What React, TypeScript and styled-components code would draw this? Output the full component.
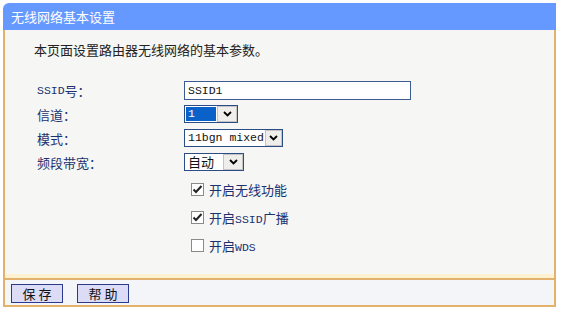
import React from 'react'
import styled, { createGlobalStyle } from 'styled-components'

const ORANGE = '#e2b26c'
const NAVY = '#1c3270'

const GlobalStyle = createGlobalStyle`
  body {
    margin: 0;
    background: #fff;
    font-family: "Noto Sans CJK SC", sans-serif;
    font-size: 13px;
  }
`

const Panel = styled.div`
  width: 553px;
  margin: 3px 0 0 3px;
`

const Header = styled.div`
  height: 27px;
  padding-left: 8px;
  display: flex;
  align-items: center;
  background: #6699ff;
  border-radius: 6px 0 0 0;
  color: #fff;
  font-size: 13px;
`

const Body = styled.div`
  height: 244px;
  box-sizing: border-box;
  padding: 12px 0 0 29px;
  background: #f6f6f4;
  border-left: 2px solid ${ORANGE};
  border-right: 2px solid ${ORANGE};
`

const Desc = styled.div`
  line-height: 16px;
  color: #222;
`

const Form = styled.div`
  margin: 23px 0 0 3px;
  display: grid;
  grid-template-columns: 147px auto;
  grid-auto-rows: 19px;
  row-gap: 5px;
`

const Label = styled.div`
  display: flex;
  align-items: center;
  color: ${NAVY};
  line-height: 19px;
`

const Lat = styled.span`
  font-family: "Liberation Mono", monospace;
  font-size: 11.5px;
`

const Field = styled.div`
  display: flex;
  align-items: flex-start;
`

const TextInput = styled.div`
  width: 227px;
  height: 19px;
  box-sizing: border-box;
  padding-left: 3px;
  display: flex;
  align-items: center;
  background: #fff;
  border: 1px solid #3b5b92;
  color: #111;
  line-height: 15px;
`

const SelectBox = styled.div<{ $width: number }>`
  width: ${(p) => p.$width}px;
  height: 18px;
  box-sizing: border-box;
  display: flex;
  background: #fff;
  border: 1px solid #2c4c88;
`

const SelectValue = styled.div<{ $active?: boolean }>`
  flex: 1;
  margin: 1px;
  padding-left: 2px;
  display: flex;
  align-items: center;
  line-height: 14px;
  background: ${(p) => (p.$active ? '#0a62c9' : 'transparent')};
  color: ${(p) => (p.$active ? '#fff' : '#111')};
  white-space: nowrap;
`

const SelectArrow = styled.div`
  width: 20px;
  box-sizing: border-box;
  display: flex;
  align-items: center;
  justify-content: center;
  background: #efeeeb;
  border: 1px solid #c4c4c4;
`

const CheckList = styled.div`
  margin: 3px 0 0 152px;
  display: flex;
  flex-direction: column;
`

const CheckRow = styled.div`
  height: 28px;
  padding-left: 5px;
  display: flex;
  align-items: center;
  gap: 5px;
  color: ${NAVY};
`

const Box = styled.div`
  width: 13px;
  height: 13px;
  box-sizing: border-box;
  display: flex;
  align-items: center;
  justify-content: center;
  background: #fff;
  border: 1px solid #8a8a8a;
`

const Separator = styled.div`
  height: 4px;
  background: #fdf2cf;
  border-left: 2px solid ${ORANGE};
  border-right: 2px solid ${ORANGE};
  border-bottom: 2px solid ${ORANGE};
`

const Footer = styled.div`
  height: 25px;
  padding-left: 6px;
  display: flex;
  align-items: center;
  gap: 14px;
  background: #f3f5f8;
  border-left: 2px solid ${ORANGE};
  border-right: 2px solid ${ORANGE};
  border-bottom: 2px solid ${ORANGE};
`

const Button = styled.div`
  width: 52px;
  height: 19px;
  box-sizing: border-box;
  display: flex;
  align-items: center;
  justify-content: center;
  background: #dcdcf7;
  border: 1px solid #2b3a8c;
  color: #111;
  line-height: 15px;
  margin-top: 2px;
`

const Chevron = () => (
  <svg width="9" height="6" viewBox="0 0 9 6">
    <path d="M1 1 L4.5 4.5 L8 1" fill="none" stroke="#000" strokeWidth="1.8" />
  </svg>
)

const Select: React.FC<{ width: number; active?: boolean; children: React.ReactNode }> = ({
  width,
  active,
  children,
}) => (
  <SelectBox $width={width}>
    <SelectValue $active={active}>{children}</SelectValue>
    <SelectArrow>
      <Chevron />
    </SelectArrow>
  </SelectBox>
)

const Checkbox: React.FC<{ checked?: boolean; children: React.ReactNode }> = ({
  checked,
  children,
}) => (
  <CheckRow>
    <Box>
      {checked && (
        <svg width="11" height="11" viewBox="0 0 11 11">
          <path d="M1.5 5.5 L4 8 L9.5 2" fill="none" stroke="#222" strokeWidth="2" />
        </svg>
      )}
    </Box>
    <span>{children}</span>
  </CheckRow>
)

export default function App() {
  return (
    <>
      <GlobalStyle />
      <Panel>
        <Header>无线网络基本设置</Header>
        <Body>
          <Desc>本页面设置路由器无线网络的基本参数。</Desc>
          <Form>
            <Label>
              <Lat>SSID</Lat>号：
            </Label>
            <Field>
              <TextInput>
                <Lat>SSID1</Lat>
              </TextInput>
            </Field>
            <Label>信道：</Label>
            <Field>
              <Select width={54} active>
                <Lat>1</Lat>
              </Select>
            </Field>
            <Label>模式：</Label>
            <Field>
              <Select width={99}>
                <Lat>11bgn mixed</Lat>
              </Select>
            </Field>
            <Label>频段带宽：</Label>
            <Field>
              <Select width={60}>自动</Select>
            </Field>
          </Form>
          <CheckList>
            <Checkbox checked>开启无线功能</Checkbox>
            <Checkbox checked>
              开启<Lat>SSID</Lat>广播
            </Checkbox>
            <Checkbox>
              开启<Lat>WDS</Lat>
            </Checkbox>
          </CheckList>
        </Body>
        <Separator />
        <Footer>
          <Button>保 存</Button>
          <Button>帮 助</Button>
        </Footer>
      </Panel>
    </>
  )
}
